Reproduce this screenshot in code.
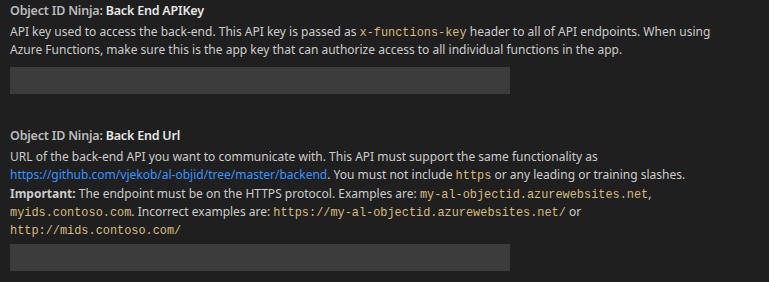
import React from 'react';

const code = "font-['Liberation_Mono',monospace] text-[11.9px] text-[#d7ba7d]";

function Setting({ title, children, gap }: { title: string; children: React.ReactNode; gap: string }) {
  return (
    <div className="px-[10px]">
      <div className="h-[18px] leading-[18px] font-semibold text-[12.5px] tracking-[-0.2px]">
        <span className="text-[#bbbbbb]">Object ID Ninja: </span>
        <span className="text-[#e7e7e7]">{title}</span>
      </div>
      <div className="mt-[3px] text-[12px] leading-[18px] text-[#cccccc] whitespace-nowrap">{children}</div>
      <div className={`${gap} h-[27px] w-[500px] bg-[#3c3c3c]`} />
    </div>
  );
}

export default function App() {
  return (
    <div className="h-[282px] w-[769px] overflow-hidden bg-[#1f1f1f] pt-[2px] font-['Noto_Sans',sans-serif]">
      <Setting title="Back End APIKey" gap="mt-[9px]">
        <div className="h-[17.5px]">
          API key used to access the back-end. This API key is passed as{' '}
          <code className={code}>x-functions-key</code> header to all of API endpoints. When using
        </div>
        <div className="h-[17.5px]">
          Azure Functions, make sure this is the app key that can authorize access to all individual functions in the app.
        </div>
      </Setting>
      <div className="h-[33px]" />
      <Setting title="Back End Url" gap="mt-[5px]">
        <div className="h-[18.3px]">
          URL of the back-end API you want to communicate with. This API must support the same functionality as
        </div>
        <div className="h-[18.3px]">
          <a className="text-[#3794ff]">https://github.com/vjekob/al-objid/tree/master/backend</a>. You must not include{' '}
          <code className={code}>https</code> or any leading or training slashes.
        </div>
        <div className="h-[18.3px]">
          <b className="font-bold">Important:</b> The endpoint must be on the HTTPS protocol. Examples are:{' '}
          <code className={code}>my-al-objectid.azurewebsites.net</code>,
        </div>
        <div className="h-[18.3px]">
          <code className={code}>myids.contoso.com</code>. Incorrect examples are:{' '}
          <code className={code}>https://my-al-objectid.azurewebsites.net/</code> or
        </div>
        <div className="h-[18.3px]">
          <code className={code}>http://mids.contoso.com/</code>
        </div>
      </Setting>
    </div>
  );
}
